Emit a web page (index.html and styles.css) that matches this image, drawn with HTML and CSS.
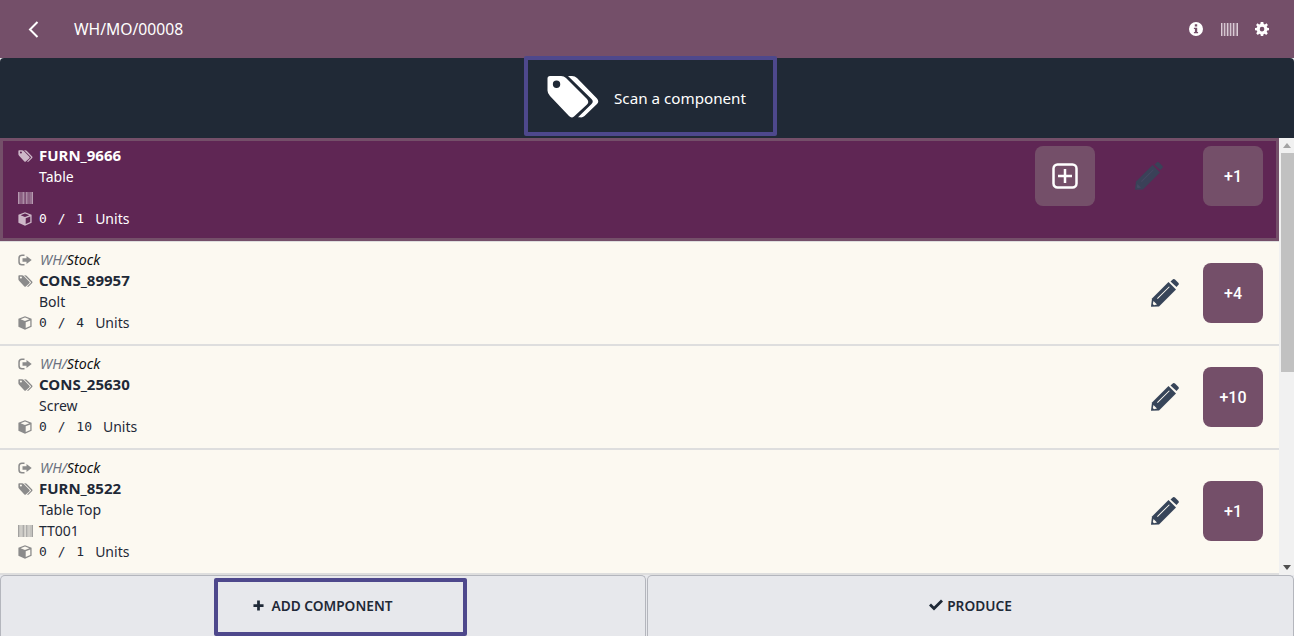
FILE: index.html
```html
<!DOCTYPE html>
<html lang="en">
<head>
<meta charset="utf-8">
<title>WH/MO/00008</title>
<link rel="stylesheet" href="styles.css">
</head>
<body>
<svg class="defs" width="0" height="0" aria-hidden="true">
  <defs>
    <symbol id="tags" viewBox="0 0 52 43">
      <path fill-rule="evenodd" d="M3 1H14Q17 1 19 3L40 24Q42.5 27 40 29.500L27 41.500Q24.500 43.500 22 41L3 21Q.5 18.500 .5 15.500V3.500Q.5 1 3 1ZM9.500 5.500A3.700 3.700 0 1 0 9.600 12.900A3.700 3.700 0 1 0 9.500 5.500Z"/>
      <path d="M21 1H25Q28 1 30 3L50 23.500Q52.500 26.500 50 29L37.500 41Q35.500 42.800 33 42.300H31L44.500 29Q47 26.500 44.500 24Z"/>
    </symbol>
    <symbol id="pencil" viewBox="0 0 28 28">
      <path d="M0 27.800L1 19.500L17.500 3L25 10.500L8 27.500Z"/>
      <path d="M19.500 2.500L22 .3Q23 -.3 24 .5L27.500 4Q28.200 5 27.500 5.800L25.500 8Z"/>
      <path class="pencil-mark" d="M2.500 22L6 25.500L3 26.200L1.800 25ZM6 19.200L18 7.400L18.700 8.100L6.700 19.900Z"/>
    </symbol>
    <symbol id="cube" viewBox="0 0 14 14">
      <path fill-rule="evenodd" d="M7 .3L13.600 2.800V10.700L7 13.700L.4 10.700V2.800ZM7 1.600L2.600 3.300L7 5L11.400 3.300ZM7.700 6.200V12L12.300 9.900V4.400Z"/>
    </symbol>
    <symbol id="out" viewBox="0 0 14 12">
      <path d="M4 .5H6.500V2H4Q1.800 2 1.800 4V8Q1.800 10 4 10H6.500V11.500H4Q.3 11.500 .3 8V4Q.3 .5 4 .5Z"/>
      <path d="M8.500 2L13.700 6L8.500 10V7.800H4.500V4.200H8.500Z"/>
    </symbol>
    <symbol id="barcode" viewBox="0 0 15 12" preserveAspectRatio="none">
      <path d="M0 0h.8v12H0zM1.400 0h.5v12h-.5zM2.600 0h.8v12h-.8zM4.100 0h.5v12h-.5zM5.300 0h.8v12h-.8zM6.700 0h.5v12h-.5zM7.900 0h.8v12h-.8zM9.400 0h.5v12h-.5zM10.600 0h.8v12h-.8zM12 0h.5v12H12zM13.200 0h.5v12h-.5zM14.200 0h.8v12h-.8z"/>
    </symbol>
  </defs>
</svg>

<header class="topbar">
  <svg class="back" viewBox="0 0 11 17" width="11" height="17"><path d="M9.500 1L2 8.500L9.500 16"/></svg>
  <span class="title">WH/MO/00008</span>
  <div class="top-actions">
    <svg class="top-icon" viewBox="0 0 14 14" width="14" height="14"><path fill-rule="evenodd" d="M7 0A7 7 0 1 1 7 14A7 7 0 1 1 7 0ZM5.800 2.300V4.600H8.200V2.300ZM4.900 5.800V7H5.900V9.900H4.900V11.200H9.100V9.900H8.200V5.800Z"/></svg>
    <svg class="top-barcode"><use href="#barcode"/></svg>
    <svg class="top-icon gear" viewBox="0 0 14 14" width="14" height="14"><path fill-rule="evenodd" d="M5.700 0H8.300L8.700 1.900L9.900 2.400L11.500 1.300L12.900 3L11.700 4.500L12.200 5.700L14 6V8.200L12.200 8.600L11.700 9.800L12.800 11.300L11.200 12.900L9.700 11.800L8.500 12.300L8.200 14H5.800L5.500 12.300L4.300 11.800L2.800 12.900L1.200 11.300L2.300 9.800L1.800 8.600L0 8.200V6L1.800 5.700L2.300 4.500L1.100 3L2.500 1.300L4.100 2.400L5.300 1.900ZM7 4.800A2.300 2.300 0 1 0 7.100 9.400A2.300 2.300 0 1 0 7 4.800Z"/></svg>
  </div>
</header>

<section class="banner">
  <div class="scan-box">
    <svg class="scan-tags"><use href="#tags"/></svg>
    <span class="scan-text">Scan a component</span>
  </div>
</section>

<div class="content">
  <main class="list">
    <article class="row row-active">
      <div class="info">
        <div class="line"><svg class="ic ic-tag"><use href="#tags"/></svg><strong>FURN_9666</strong></div>
        <div class="line"><span class="ic-gap"></span>Table</div>
        <div class="line"><svg class="ic ic-bar"><use href="#barcode"/></svg></div>
        <div class="line"><svg class="ic ic-cube"><use href="#cube"/></svg><span class="qty">0 / 1</span><span class="unit">Units</span></div>
      </div>
      <div class="actions">
        <button class="btn-square btn-soft"><svg viewBox="0 0 26 26" width="26" height="26"><rect x="1.500" y="1.500" width="23" height="23" rx="4"/><path d="M13 6V20M6 13H20"/></svg></button>
        <svg class="pencil pencil-dim"><use href="#pencil"/></svg>
        <button class="btn-square btn-soft">+1</button>
      </div>
    </article>

    <article class="row">
      <div class="info">
        <div class="line"><svg class="ic ic-out"><use href="#out"/></svg><em class="loc"><span>WH/</span>Stock</em></div>
        <div class="line"><svg class="ic ic-tag"><use href="#tags"/></svg><strong>CONS_89957</strong></div>
        <div class="line"><span class="ic-gap"></span>Bolt</div>
        <div class="line"><svg class="ic ic-cube"><use href="#cube"/></svg><span class="qty">0 / 4</span><span class="unit">Units</span></div>
      </div>
      <div class="actions">
        <svg class="pencil"><use href="#pencil"/></svg>
        <button class="btn-square">+4</button>
      </div>
    </article>

    <article class="row">
      <div class="info">
        <div class="line"><svg class="ic ic-out"><use href="#out"/></svg><em class="loc"><span>WH/</span>Stock</em></div>
        <div class="line"><svg class="ic ic-tag"><use href="#tags"/></svg><strong>CONS_25630</strong></div>
        <div class="line"><span class="ic-gap"></span>Screw</div>
        <div class="line"><svg class="ic ic-cube"><use href="#cube"/></svg><span class="qty">0 / 10</span><span class="unit">Units</span></div>
      </div>
      <div class="actions">
        <svg class="pencil"><use href="#pencil"/></svg>
        <button class="btn-square">+10</button>
      </div>
    </article>

    <article class="row row-tall">
      <div class="info">
        <div class="line"><svg class="ic ic-out"><use href="#out"/></svg><em class="loc"><span>WH/</span>Stock</em></div>
        <div class="line"><svg class="ic ic-tag"><use href="#tags"/></svg><strong>FURN_8522</strong></div>
        <div class="line"><span class="ic-gap"></span>Table Top</div>
        <div class="line"><svg class="ic ic-bar"><use href="#barcode"/></svg>TT001</div>
        <div class="line"><svg class="ic ic-cube"><use href="#cube"/></svg><span class="qty">0 / 1</span><span class="unit">Units</span></div>
      </div>
      <div class="actions">
        <svg class="pencil"><use href="#pencil"/></svg>
        <button class="btn-square">+1</button>
      </div>
    </article>
  </main>
  <div class="scrollbar" aria-hidden="true">
    <span class="arrow arrow-up"></span>
    <span class="thumb"></span>
    <span class="arrow arrow-down"></span>
  </div>
</div>

<footer class="footer">
  <button class="foot-btn foot-add">
    <svg class="foot-icon" viewBox="0 0 12 12" width="11" height="11"><path d="M4.500 .5H7.500V4.500H11.500V7.500H7.500V11.500H4.500V7.500H.5V4.500H4.500Z"/></svg>
    ADD COMPONENT
    <span class="hint-box"></span>
  </button>
  <button class="foot-btn foot-produce">
    <svg class="foot-icon" viewBox="0 0 14 12" width="14" height="12"><path d="M0 6.500L2 4.500L5 7.500L12 .5L14 2.500L5 11.500Z"/></svg>
    PRODUCE
  </button>
</footer>
</body>
</html>
```
FILE: styles.css
```css
* { box-sizing: border-box; }
html, body { height: 100%; }
body {
  margin: 0;
  height: 636px;
  overflow: hidden;
  display: flex;
  flex-direction: column;
  font-family: "Noto Sans", "Open Sans", sans-serif;
  font-size: 14px;
  color: #1f2937;
  background: #e7e8ec;
}
.defs { position: absolute; }

.topbar {
  flex: 0 0 58px;
  display: flex;
  align-items: center;
  padding: 0 25px 0 28px;
  background: #744f69;
  color: #fff;
}
.back { fill: none; stroke: #fff; stroke-width: 2; }
.title { margin-left: 35px; font-size: 15.7px; }
.top-actions { margin-left: auto; display: flex; align-items: center; gap: 10px; }
.top-icon { fill: #fff; }
.top-barcode { width: 17px; height: 13px; fill: #e5d9e1; margin-left: 8px; margin-right: 7px; }

.banner {
  flex: 0 0 80px;
  display: flex;
  justify-content: center;
  background: #202936;
  border-radius: 4px 4px 0 0;
  color: #fff;
}
.scan-box {
  width: 253px;
  height: 80px;
  margin: -2px 0 0 7px;
  padding-left: 19px;
  display: flex;
  align-items: center;
  gap: 15px;
  border: 4px solid #4e488c;
  border-radius: 2px;
  font-size: 15.2px;
}
.scan-tags { width: 52px; height: 43px; fill: #fff; }
.scan-text { margin-top: 3px; }

.content { flex: 1 1 auto; min-height: 0; display: flex; background: #f1f1f1; }
.list { flex: 1 1 auto; min-width: 0; overflow: hidden; background: #dedede; }

.row {
  display: flex;
  align-items: center;
  padding: 7px 16px 11px 18px;
  background: #fcf9f1;
  border-bottom: 2px solid #dedede;
}
.row-active {
  align-items: flex-start;
  margin-bottom: 1px;
  padding: 4px 13px 9px 15px;
  border: 3px solid #744f69;
  background: #5f2654;
  color: #fff;
}
.info { flex: 1 1 auto; min-width: 0; }
.line { display: flex; align-items: center; height: 21px; line-height: 21px; }
.line strong { font-weight: 700; font-size: 15px; }
.ic { flex: 0 0 auto; margin-right: 6px; fill: #8b8b8b; }
.row-active .ic { fill: #cdb8c8; }
.ic-tag { width: 15px; height: 12px; }
.ic-bar { width: 15px; height: 12px; }
.ic-cube { width: 14px; height: 14px; margin-right: 7px; }
.ic-out { width: 14px; height: 12px; margin-right: 8px; }
.ic-gap { width: 21px; }
.loc { color: #111; font-size: 14.2px; }
.loc span { color: #6b7280; }
.qty { font-family: "DejaVu Sans Mono", monospace; font-size: 13px; white-space: pre; word-spacing: 3px; }
.unit { margin-left: 11px; }

.actions { flex: 0 0 auto; display: flex; align-items: center; gap: 24px; margin-top: 4px; }
.row-active .actions { gap: 40px; margin-top: 1px; }
.row-tall .actions { margin-top: 3px; }
.btn-square {
  width: 60px;
  height: 60px;
  padding: 0;
  display: flex;
  align-items: center;
  justify-content: center;
  border: 0;
  border-radius: 8px;
  background: #744f69;
  color: #fff;
  font-family: "Roboto", "Noto Sans", sans-serif;
  font-size: 16px;
  font-weight: 500;
}
.btn-square svg { fill: none; stroke: #fff; stroke-width: 2.500; }
.btn-soft { background: #744f69; }
.pencil { --mark: #fcf9f1; width: 28px; height: 28px; fill: #374559; }
.pencil-mark { fill: var(--mark); }
.pencil-dim { --mark: #444c64; opacity: .9; }

.scrollbar { flex: 0 0 15px; display: flex; flex-direction: column; align-items: center; background: #f1f1f1; }
.thumb { width: 13px; margin: 0 0 0 1px; flex: 0 0 219px; background: #c1c1c1; }
.arrow { flex: 0 0 15px; width: 0; height: 0; border-left: 4px solid transparent; border-right: 4px solid transparent; }
.arrow-up { border-bottom: 5px solid #a3a3a3; flex: 0 0 auto; margin: 5px 0 5px; }
.arrow-down { border-top: 5px solid #505050; flex: 0 0 auto; margin-top: auto; margin-bottom: 5px; }

.footer { flex: 0 0 61px; display: flex; gap: 1px; }
.foot-btn {
  position: relative;
  display: flex;
  align-items: center;
  justify-content: center;
  gap: 7px;
  padding: 0 0 2px;
  border: 1px solid #b4b6bd;
  border-bottom: 0;
  border-radius: 5px 5px 0 0;
  background: #e7e8ec;
  color: #1f2937;
  font-family: "Noto Sans", sans-serif;
  font-size: 13.7px;
  font-weight: 600;
}
.foot-add { flex: 0 0 646px; }
.foot-produce { flex: 1 1 0; gap: 4px; }
.foot-icon { fill: #1f2937; }
.hint-box {
  position: absolute;
  left: 213px;
  top: 2px;
  width: 253px;
  height: 58px;
  border: 4px solid #4e488c;
  border-radius: 2px;
}
```
